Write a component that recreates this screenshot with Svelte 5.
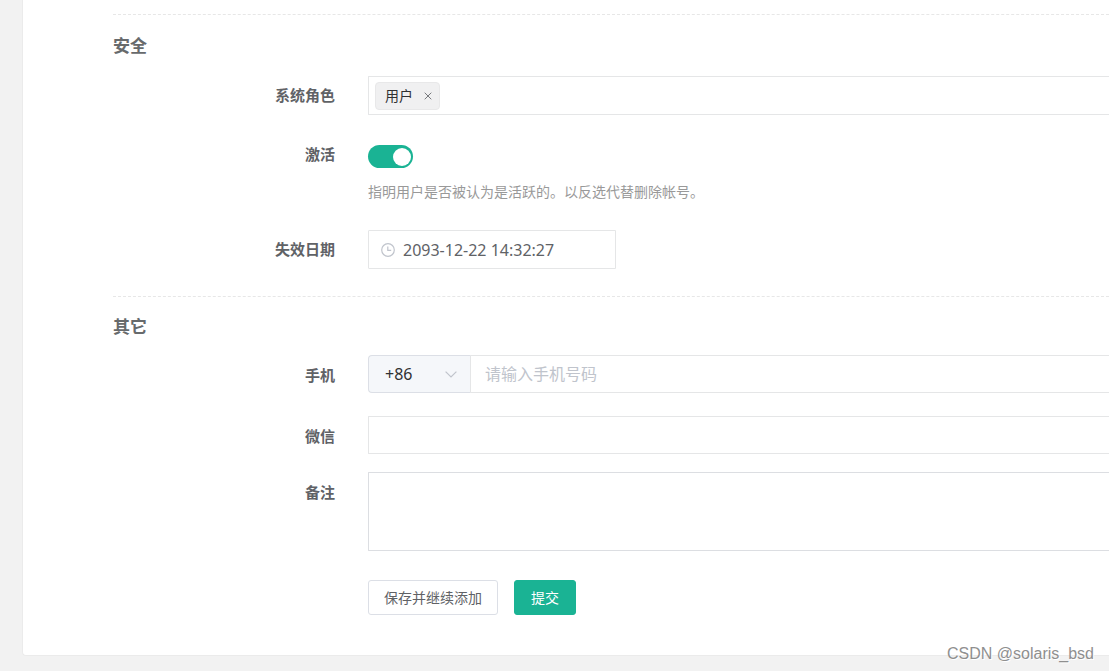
<script lang="ts">
    let roles = [{ id: 2, name: "用户" }];

    let user = {
        active: true,
        expires: "2093-12-22 14:32:27",
        area_code: "+86",
        phone: "",
        wechat: "",
        remark: "",
    };

    const area_codes = ["+86", "+852", "+853", "+886"];

    function removeRole(id: number) {
        roles = roles.filter((role) => role.id !== id);
    }
</script>

<div class="page">
    <form class="card" on:submit|preventDefault>
        <section>
            <h2>安全</h2>

            <div class="row">
                <label for="roles">系统角色</label>
                <div class="box tags">
                    {#each roles as role (role.id)}
                        <span class="tag">
                            {role.name}
                            <button
                                class="tag-close"
                                type="button"
                                aria-label="移除"
                                on:click={() => removeRole(role.id)}
                            >
                                <svg viewBox="0 0 8 8" width="8" height="8">
                                    <path d="M.7.7l6.6 6.6M7.3.7L.7 7.3" />
                                </svg>
                            </button>
                        </span>
                    {/each}
                    <input id="roles" type="text" />
                </div>
            </div>

            <div class="row">
                <label for="active">激活</label>
                <div class="toggle">
                    <input
                        id="active"
                        class="switch"
                        type="checkbox"
                        role="switch"
                        aria-checked={user.active}
                        bind:checked={user.active}
                    />
                    <p>指明用户是否被认为是活跃的。以反选代替删除帐号。</p>
                </div>
            </div>

            <div class="row">
                <label for="expires">失效日期</label>
                <div class="box date">
                    <svg viewBox="0 0 14 14" width="14" height="14">
                        <circle cx="7" cy="7" r="6.3" />
                        <path d="M6.8 3.4v4h3.4" />
                    </svg>
                    <input id="expires" type="text" bind:value={user.expires} />
                </div>
            </div>
        </section>

        <section class="other">
            <h2>其它</h2>

            <div class="row">
                <label for="phone">手机</label>
                <div class="phone">
                    <div class="area">
                        <select aria-label="区号" bind:value={user.area_code}>
                            {#each area_codes as code}
                                <option value={code}>{code}</option>
                            {/each}
                        </select>
                        <svg viewBox="0 0 12 7" width="12" height="7">
                            <path d="M.6.6L6 6l5.4-5.4" />
                        </svg>
                    </div>
                    <input
                        id="phone"
                        class="box"
                        type="tel"
                        placeholder="请输入手机号码"
                        bind:value={user.phone}
                    />
                </div>
            </div>

            <div class="row">
                <label for="wechat">微信</label>
                <input id="wechat" class="box" type="text" bind:value={user.wechat} />
            </div>

            <div class="row remark">
                <label for="remark">备注</label>
                <textarea id="remark" class="box" bind:value={user.remark}></textarea>
            </div>

            <div class="actions">
                <button class="button" type="button">保存并继续添加</button>
                <button class="button button-primary" type="submit">提交</button>
            </div>
        </section>
    </form>

    <span class="watermark">CSDN @solaris_bsd</span>
</div>

<style>
    :global(body) {
        margin: 0;
        background: #f2f2f2;
    }

    .page {
        position: relative;
        min-height: 100vh;
        box-sizing: border-box;
        padding: 0 0 15px 22px;
        overflow: hidden;

        color: #606266;
        font-family: "Noto Sans", "Noto Sans CJK SC", sans-serif;
        font-size: 14px;
    }

    .card {
        padding: 14px 0 40px 90px;
        border-left: 1px solid #ebebeb;
        border-bottom: 1px solid #ebebeb;
        border-bottom-left-radius: 4px;
        background: #fff;
    }

    section {
        padding-top: 18px;
        border-top: 1px dashed #e7e7e7;
    }
    section.other {
        margin-top: 27px;
        padding-top: 17px;
    }

    h2 {
        margin: 0 0 19px;

        color: #676a6c;
        font-family: "Noto Sans CJK SC", sans-serif;
        font-size: 17px;
        font-weight: 700;
        line-height: 24px;
    }
    .other h2 {
        margin-bottom: 17px;
    }

    .row {
        display: grid;
        grid-template-columns: 222px 1fr;
        column-gap: 33px;
        align-items: start;
    }
    .row + .row {
        margin-top: 20px;
    }
    .row > label {
        text-align: right;
        font-family: "Noto Sans CJK SC", sans-serif;
        font-size: 15px;
        font-weight: 700;
        line-height: 38px;
    }
    .other .row + .row {
        margin-top: 21px;
    }
    .other .row.remark {
        margin-top: 16px;
    }
    .other .row > label {
        line-height: 40px;
    }

    input,
    select,
    textarea,
    button {
        margin: 0;
        color: inherit;
        font-family: inherit;
        outline: none;
    }

    .box {
        width: 100%;
        height: 38px;
        box-sizing: border-box;
        padding: 0 14px;
        border: 1px solid #e5e6e7;
        border-right: none;
        border-radius: 1px 0 0 1px;
        background: #fff;
        font-size: 16px;
    }
    .box::placeholder {
        color: #c0c4cc;
        opacity: 1;
    }
    .box input {
        flex: 1;
        min-width: 0;
        padding: 0;
        border: none;
        background: none;
        font-size: 16px;
    }

    .tags {
        display: flex;
        align-items: center;
        height: 39px;
        padding: 0 6px;
    }
    .tag {
        display: flex;
        align-items: center;
        gap: 9px;
        height: 28px;
        box-sizing: border-box;
        padding: 0 5px 0 9px;
        border: 1px solid #e8e8e9;
        border-radius: 4px;
        background: #f0f0f1;
        color: #303133;
        font-size: 14px;
        line-height: 24px;
    }
    .tag-close {
        display: flex;
        padding: 2px;
        border: none;
        background: none;
        cursor: pointer;
    }

    svg {
        flex: none;
        fill: none;
        stroke: #c0c4cc;
        stroke-width: 1.2;
    }
    .tag-close svg {
        stroke: #77797d;
        stroke-width: 1;
    }

    .toggle {
        padding-top: 10px;
        padding-bottom: 8px;
    }
    .switch {
        display: flex;
        align-items: center;
        justify-content: flex-start;
        width: 45px;
        height: 23px;
        box-sizing: border-box;
        padding: 0 2px;
        border-radius: 12px;
        background: #dcdfe6;
        appearance: none;
        cursor: pointer;
    }
    .switch::before {
        content: "";
        width: 18px;
        height: 18px;
        border-radius: 50%;
        background: #fff;
    }
    .switch:checked {
        justify-content: flex-end;
        background: #1ab394;
    }
    .toggle p {
        margin: 14px 0 0;
        color: #999;
        font-size: 14px;
        line-height: 20px;
    }

    .date {
        display: flex;
        align-items: center;
        gap: 8px;
        width: 248px;
        height: 39px;
        padding: 0 12px;
        border-right: 1px solid #e5e6e7;
    }

    .phone {
        display: flex;
    }
    .area {
        display: grid;
        align-items: center;
        flex: none;
        width: 102px;
    }
    .area select,
    .area svg {
        grid-area: 1 / 1;
    }
    .area svg {
        justify-self: end;
        margin-right: 13px;
        pointer-events: none;
    }
    .area select {
        width: 100%;
        height: 38px;
        box-sizing: border-box;
        padding: 0 16px;
        border: 1px solid #dcdfe6;
        border-right: none;
        border-radius: 4px 0 0 4px;
        background: #f5f7fa;
        color: #303133;
        font-size: 16px;
        appearance: none;
    }

    textarea.box {
        display: block;
        height: 79px;
        padding: 8px 14px;
        border-color: #dcdee2;
        resize: none;
    }

    .actions {
        display: flex;
        gap: 16px;
        margin-top: 29px;
        padding-left: 255px;
    }
    .button {
        height: 35px;
        box-sizing: border-box;
        padding: 0 15px;
        border: 1px solid #dcdfe6;
        border-radius: 3px;
        background: #fff;
        font-size: 14px;
        line-height: 20px;
        cursor: pointer;
    }
    .button-primary {
        padding: 0 16px;
        border-color: #1ab394;
        background: #1ab394;
        color: #fff;
    }

    .watermark {
        position: absolute;
        right: 15px;
        bottom: 7px;

        color: #8f8f8f;
        font-family: "Liberation Sans", Arial, sans-serif;
        font-size: 16px;
        line-height: 20px;
        text-shadow: 1px 1px 0 #fff;
    }
</style>
